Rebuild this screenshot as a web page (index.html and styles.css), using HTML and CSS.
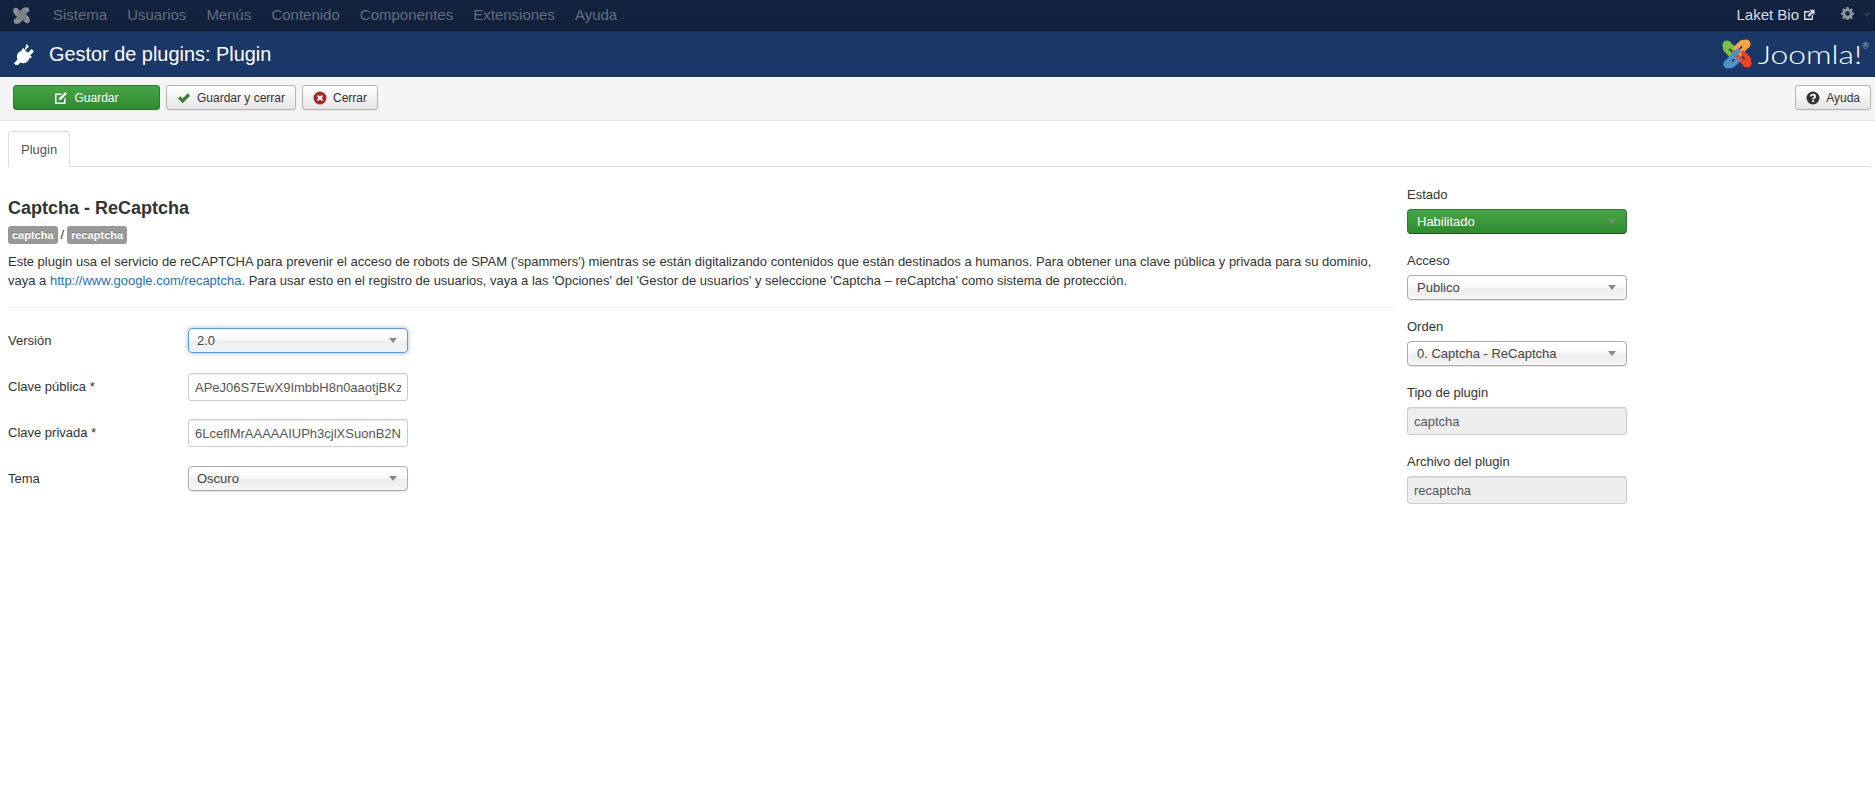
FILE: index.html
```html
<!DOCTYPE html>
<html lang="es">
<head>
<meta charset="utf-8">
<title>Gestor de plugins: Plugin</title>
<link rel="stylesheet" href="styles.css">
</head>
<body>
<svg class="defs" width="0" height="0" aria-hidden="true">
  <symbol id="hook" viewBox="0 0 30 30">
    <path d="M18 16 L9.5 7.5 Q6.5 4.5 4 7 Q2 10 5.5 12.5 L9 16" fill="none" stroke-width="4.6" stroke-linecap="round"/>
    <circle cx="5" cy="6" r="4.6" stroke="none"/>
  </symbol>
</svg>
<nav class="topbar">
  <svg class="nav-logo" viewBox="0 0 30 30">
    <use href="#hook" class="mark-gray"/>
    <use href="#hook" class="mark-gray" transform="rotate(90 15 15)"/>
    <use href="#hook" class="mark-gray" transform="rotate(180 15 15)"/>
    <use href="#hook" class="mark-gray" transform="rotate(270 15 15)"/>
    <rect class="mark-core" x="7" y="7" width="16" height="16"/>
  </svg>
  <ul class="menu">
    <li>Sistema</li><li>Usuarios</li><li>Menús</li><li>Contenido</li><li>Componentes</li><li>Extensiones</li><li>Ayuda</li>
  </ul>
  <div class="top-right">
    <a class="site-link">Laket Bio
      <svg class="ext-icon" viewBox="0 0 12 12"><path fill-rule="evenodd" d="M1 2h6.2L5.8 3.4H2.4v6.2h6.2V6.8L10 5.4V11H1z"/><path d="M6.4 0.8H11.6V6L9.8 4.2 6 8 4.4 6.4 8.2 2.6z"/></svg>
    </a>
    <svg class="gear" viewBox="0 0 16 16"><path fill-rule="evenodd" d="M6.7 0h2.6l.4 2.2 1.3.6 1.9-1.3 1.8 1.9-1.2 1.8.5 1.4 2 .4v2.6l-2 .4-.5 1.4 1.2 1.8-1.8 1.9-1.9-1.3-1.3.6-.4 2.1H6.7l-.4-2.1-1.3-.6-1.9 1.3-1.8-1.9 1.2-1.8-.5-1.4-2-.4V7l2-.4.5-1.4L1.3 3.4l1.8-1.9L5 2.8l1.3-.6zM8 5.3a2.7 2.7 0 1 0 0 5.4 2.7 2.7 0 0 0 0-5.4z"/></svg>
    <span class="caret"></span>
  </div>
</nav>
<header class="titlebar">
  <svg class="plug" viewBox="2 1.5 20.5 20.5"><path d="M15.2 1.6l2.3 2.3-3.6 3.6 2.6 2.6 3.6-3.6 2.3 2.3-3.6 3.6 1.7 1.7-1.6 1.6-1.1-.3c-.6 2.8-2.6 4.6-5.2 4.8-1.4.1-2.4-.1-3.3-.7l-3.6 3.6-2.8-2.8 3.6-3.6c-.6-.9-.8-2-.7-3.3.2-2.6 2-4.6 4.8-5.2l-.3-1.1 1.6-1.6 1.7 1.7z"/></svg>
  <h1>Gestor de plugins: Plugin</h1>
  <div class="brand">
    <svg class="brand-mark" viewBox="0 0 30 30">
      <use href="#hook" class="mark-green"/>
      <use href="#hook" class="mark-orange" transform="rotate(90 15 15)"/>
      <use href="#hook" class="mark-red" transform="rotate(180 15 15)"/>
      <use href="#hook" class="mark-blue" transform="rotate(270 15 15)"/>
    </svg>
    <span class="brand-name">Joomla!</span><sup class="brand-reg">®</sup>
  </div>
</header>
<div class="toolbar">
  <button class="btn btn-success">
    <svg class="ic" viewBox="0 0 14 14"><path d="M1 2.5h7L6.6 4H2.5v7.5h7.5V8l1.5-1.4V13H1z"/><path d="M11.2 1l1.8 1.8-6 6-2.3.5.5-2.3z"/></svg>
    Guardar
  </button>
  <button class="btn">
    <svg class="ic" viewBox="0 0 14 14"><path class="ic-green" d="M1 7.4l2.2-2.2 2.4 2.4 5.2-5.4L13 4.9 5.6 12.2z"/></svg>
    Guardar y cerrar
  </button>
  <button class="btn">
    <svg class="ic" viewBox="0 0 14 14"><circle class="ic-red" cx="7" cy="7" r="6.5"/><path d="M4.6 4.6l4.8 4.8M9.4 4.6l-4.8 4.8" class="ic-x"/></svg>
    Cerrar
  </button>
  <button class="btn btn-help">
    <svg class="ic" viewBox="0 0 14 14"><circle class="ic-dark" cx="7" cy="7" r="6.5"/><path class="ic-q" d="M4.9 5.4C5 4.2 5.9 3.6 7 3.6c1.3 0 2.1.8 2.1 1.8 0 1.5-2 1.6-2 3"/><rect class="ic-dot" x="6.1" y="9.4" width="2" height="1.7"/></svg>
    Ayuda
  </button>
</div>
<div class="tabs"><span class="tab">Plugin</span></div>
<main class="content">
  <section class="main-col">
    <h2>Captcha - ReCaptcha</h2>
    <div class="badges"><span class="badge">captcha</span> / <span class="badge">recaptcha</span></div>
    <p class="desc">Este plugin usa el servicio de reCAPTCHA para prevenir el acceso de robots de SPAM ('spammers') mientras se están digitalizando contenidos que están destinados a humanos. Para obtener una clave pública y privada para su dominio, vaya a <a href="#">http://www.google.com/recaptcha</a>. Para usar esto en el registro de usuarios, vaya a las 'Opciones' del 'Gestor de usuarios' y seleccione 'Captcha – reCaptcha' como sistema de protección.</p>
    <hr>
    <div class="form">
      <div class="row row-select"><label>Versión</label><div class="chosen focus">2.0</div></div>
      <div class="row row-input"><label>Clave pública *</label><input class="text" type="text" value="APeJ06S7EwX9ImbbH8n0aaotjBKz"></div>
      <div class="row row-input"><label>Clave privada *</label><input class="text" type="text" value="6LceflMrAAAAAIUPh3cjlXSuonB2N"></div>
      <div class="row row-select"><label>Tema</label><div class="chosen">Oscuro</div></div>
    </div>
  </section>
  <aside class="side-col">
    <div class="group"><label>Estado</label><div class="chosen green">Habilitado</div></div>
    <div class="group"><label>Acceso</label><div class="chosen">Publico</div></div>
    <div class="group"><label>Orden</label><div class="chosen">0. Captcha - ReCaptcha</div></div>
    <div class="group"><label>Tipo de plugin</label><input class="text ro" type="text" value="captcha" readonly></div>
    <div class="group"><label>Archivo del plugin</label><input class="text ro" type="text" value="recaptcha" readonly></div>
  </aside>
</main>
</body>
</html>
```

FILE: styles.css
```css
* { box-sizing: border-box; }
html, body { margin: 0; padding: 0; background: #fff; }
body { font-family: "Liberation Sans", Arial, sans-serif; font-size: 13px; line-height: 18px; color: #333; overflow: hidden; }
.defs { position: absolute; }

.topbar { height: 31px; background: linear-gradient(#14233f, #11213c); border-bottom: 1px solid #0c1a30; display: flex; align-items: center; padding: 0 4px 0 13px; }
.nav-logo { width: 17px; height: 17px; }
.mark-gray { fill: #8c8f96; stroke: #8c8f96; }
.mark-core { fill: #7b7f88; }
.menu { display: flex; list-style: none; margin: 0 0 0 23px; padding: 0; gap: 20px; font-size: 15px; color: #656d7c; }
.top-right { margin-left: auto; display: flex; align-items: center; color: #d9dde3; font-size: 15px; }
.site-link { display: flex; align-items: center; gap: 4px; }
.ext-icon { width: 12px; height: 12px; fill: #d9dde3; }
.gear { width: 13px; height: 13px; fill: #8c929c; margin-left: 26px; margin-bottom: 3px; }
.caret { width: 0; height: 0; border: 4px solid transparent; border-top-color: #333c4c; border-bottom: 0; margin-left: 9px; }

.titlebar { height: 46px; background: #1a3867; display: flex; align-items: center; padding: 0 6px 0 13px; color: #fff; }
.plug { width: 21px; height: 21px; fill: #fff; }
.titlebar h1 { margin: 0 0 0 15px; font-size: 19.9px; font-weight: 400; line-height: 24px; }
.brand { margin-left: auto; display: flex; align-items: center; }
.brand-mark { width: 30px; height: 30px; }
.mark-green { fill: #7ac143; stroke: #7ac143; }
.mark-orange { fill: #f9a541; stroke: #f9a541; }
.mark-red { fill: #f44321; stroke: #f44321; }
.mark-blue { fill: #5091cd; stroke: #5091cd; }
.brand-name { display: inline-block; width: 104px; margin-left: 6px; font-family: Lato, sans-serif; font-weight: 300; font-size: 25px; line-height: 30px; transform: scaleX(1.27); transform-origin: left center; }
.brand-reg { font-size: 9px; color: #a9b3c2; line-height: 9px; align-self: flex-start; margin-top: 3px; }

.toolbar { height: 44px; background: #f5f5f5; border-bottom: 1px solid #e2e2e2; display: flex; align-items: center; gap: 6px; padding: 0 4px 2px 13px; }
.btn { height: 25px; font: inherit; font-size: 12px; color: #333; padding: 0 10px; border: 1px solid #b3b3b3; border-radius: 3px; background: linear-gradient(#fff, #e6e6e6); box-shadow: 0 1px 2px rgba(0,0,0,.05); display: flex; align-items: center; gap: 6px; }
.btn-success { width: 147px; justify-content: center; color: #fff; background: linear-gradient(#46a546, #2f8a2f); border-color: #2c7a2c; }
.btn-help { margin-left: auto; }
.ic { width: 14px; height: 14px; fill: #333; }
.btn-success .ic { fill: #fff; }
.ic-green { fill: #378137; }
.ic-red { fill: #a92a2a; }
.ic-x { stroke: #fff; stroke-width: 2; fill: none; }
.ic-dark { fill: #333; }
.ic-q { fill: none; stroke: #fff; stroke-width: 1.8; }
.ic-dot { fill: #fff; }

.tabs { margin: 10px 4px 0 8px; height: 36px; border-bottom: 1px solid #ddd; display: flex; }
.tab { height: 36px; padding: 0 12px; line-height: 36px; border: 1px solid #ddd; border-bottom-color: #fff; border-radius: 4px 4px 0 0; background: #fff; color: #555; }

.content { display: flex; padding: 0 8px; margin-top: 20px; }
.main-col { width: 1385px; flex: none; }
.main-col h2 { margin: 10px 0 6px; font-size: 18px; line-height: 22px; font-weight: 700; }
.badges { height: 19px; display: flex; align-items: center; gap: 3px; }
.badge { background: #999; color: #fff; font-size: 11px; font-weight: 700; border-radius: 3px; padding: 0 4px; height: 18px; line-height: 18px; text-shadow: 0 -1px 0 rgba(0,0,0,.25); }
.desc { margin: 9px 0 0; line-height: 18.5px; }
.desc a { color: #1f6fb5; text-decoration: none; }
hr { border: 0; border-top: 1px solid #eee; margin: 17px 0 20px; }

.form { display: flex; flex-direction: column; }
.row { display: flex; align-items: center; }
.row label { width: 180px; flex: none; }
.row-select + .row-input { margin-top: 20px; }
.row-input + .row-input { margin-top: 18px; }
.row-input + .row-select { margin-top: 19px; }

.chosen { position: relative; width: 220px; height: 25px; padding: 0 8px; line-height: 23px; color: #444; border: 1px solid #aaa; border-radius: 4px; background: linear-gradient(#fff 20%, #f6f6f6 50%, #eee 52%, #f4f4f4 100%); box-shadow: inset 0 0 3px #fff, 0 1px 1px rgba(0,0,0,.1); }
.chosen::after { content: ""; position: absolute; right: 10px; top: 9px; border: 4px solid transparent; border-top: 5px solid #888; border-bottom: 0; }
.chosen.focus { border-color: #5897fb; box-shadow: 0 0 5px rgba(0,0,0,.3); }
.chosen.green { color: #fff; background: linear-gradient(#46a546, #2f8a2f); border-color: #2c7a2c #2c7a2c #1f5c1f; box-shadow: none; }

.text { width: 220px; height: 28px; font: inherit; color: #555; padding: 4px 6px; border: 1px solid #ccc; border-radius: 3px; background: #fff; box-shadow: inset 0 1px 1px rgba(0,0,0,.075); }
.text.ro { background: #eee; }

.side-col { width: 220px; margin: -1px 0 0 14px; display: flex; flex-direction: column; }
.side-col .chosen { padding-left: 9px; }
.group label { display: block; height: 18px; line-height: 18px; margin-bottom: 5px; }
.group { margin-bottom: 18px; }
```
